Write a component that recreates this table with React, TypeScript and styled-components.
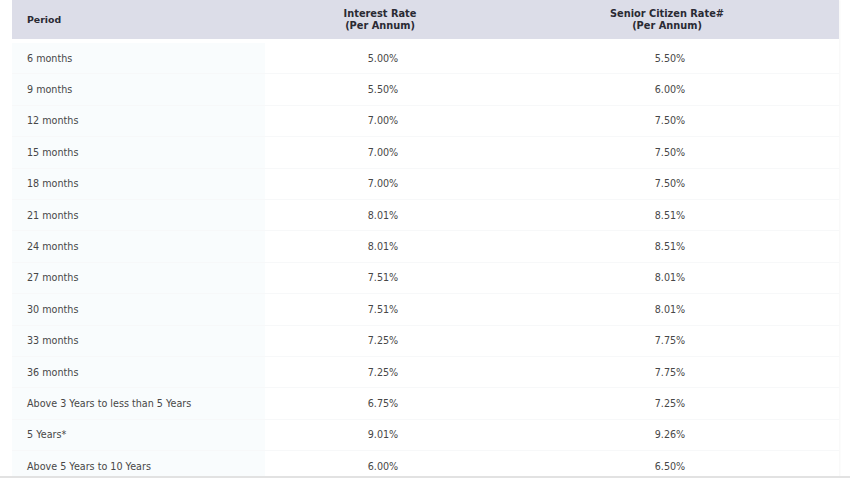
import React from 'react';
import styled, { createGlobalStyle } from 'styled-components';

const GlobalStyle = createGlobalStyle`
  html, body {
    margin: 0;
    padding: 0;
    background: #ffffff;
    overflow: hidden;
  }
  body {
    font-family: 'DejaVu Sans', Verdana, sans-serif;
  }
`;

const rates: [string, string, string][] = [
  ['6 months', '5.00%', '5.50%'],
  ['9 months', '5.50%', '6.00%'],
  ['12 months', '7.00%', '7.50%'],
  ['15 months', '7.00%', '7.50%'],
  ['18 months', '7.00%', '7.50%'],
  ['21 months', '8.01%', '8.51%'],
  ['24 months', '8.01%', '8.51%'],
  ['27 months', '7.51%', '8.01%'],
  ['30 months', '7.51%', '8.01%'],
  ['33 months', '7.25%', '7.75%'],
  ['36 months', '7.25%', '7.75%'],
  ['Above 3 Years to less than 5 Years', '6.75%', '7.25%'],
  ['5 Years*', '9.01%', '9.26%'],
  ['Above 5 Years to 10 Years', '6.00%', '6.50%'],
];

const Page = styled.div`
  height: 478px;
  padding: 0 11px 0 12px;
  box-sizing: border-box;
  border-bottom: 2px solid #e2e2e2;
  overflow: hidden;
`;

const Table = styled.div`
  display: flex;
  flex-direction: column;
  box-shadow: 1px 0 2px rgba(0, 0, 0, 0.04);
`;

const HeadRow = styled.div`
  display: grid;
  grid-template-columns: 253px 230px 1fr;
  height: 39px;
  background: #dcdde8;
  margin-bottom: 4px;
  color: #2a2a33;
  font-size: 9.8px;
  font-weight: bold;
  line-height: 12px;
`;

const HeadCell = styled.div<{ $align?: 'left' | 'center' }>`
  display: flex;
  flex-direction: column;
  justify-content: center;
  align-items: ${p => (p.$align === 'left' ? 'flex-start' : 'center')};
  padding-left: ${p => (p.$align === 'left' ? '15px' : '0')};
  font-size: ${p => (p.$align === 'left' ? '9.4px' : 'inherit')};
  text-align: center;
`;

const Row = styled.div`
  display: grid;
  grid-template-columns: 253px 230px 1fr;
  height: 31.4px;
  border-bottom: 1px solid #f7f8f9;
  box-sizing: border-box;
  color: #474747;
  font-size: 9.6px;
`;

const Cell = styled.div<{ $first?: boolean }>`
  display: flex;
  align-items: center;
  justify-content: ${p => (p.$first ? 'flex-start' : 'center')};
  padding-left: ${p => (p.$first ? '15px' : '6px')};
  background: ${p => (p.$first ? '#f9fcfd' : 'transparent')};
`;

export default function App() {
  return (
    <>
      <GlobalStyle />
      <Page>
        <Table>
          <HeadRow>
            <HeadCell $align="left">Period</HeadCell>
            <HeadCell>
              <span>Interest Rate</span>
              <span>(Per Annum)</span>
            </HeadCell>
            <HeadCell>
              <span>Senior Citizen Rate#</span>
              <span>(Per Annum)</span>
            </HeadCell>
          </HeadRow>
          {rates.map(([period, rate, senior]) => (
            <Row key={period}>
              <Cell $first>{period}</Cell>
              <Cell>{rate}</Cell>
              <Cell>{senior}</Cell>
            </Row>
          ))}
        </Table>
      </Page>
    </>
  );
}
